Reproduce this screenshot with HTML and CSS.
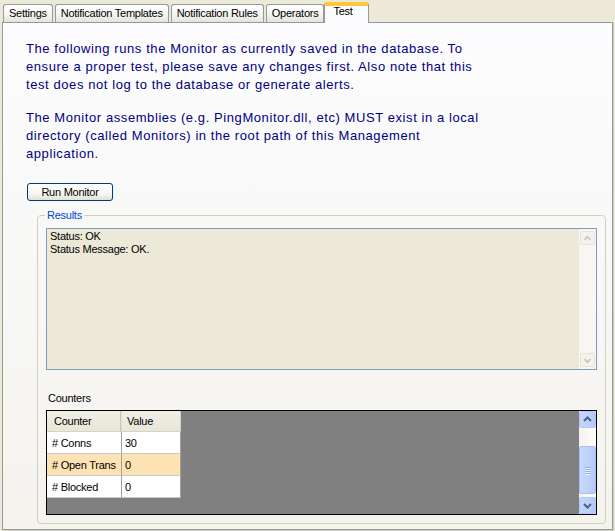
FILE: index.html
```html
<!DOCTYPE html>
<html>
<head>
<meta charset="utf-8">
<link rel="stylesheet" href="styles.css">
</head>
<body>
<div class="tabs">
  <div class="tab">Settings</div>
  <div class="tab">Notification Templates</div>
  <div class="tab">Notification Rules</div>
  <div class="tab">Operators</div>
  <div class="tab active">Test</div>
</div>
<div class="panel">
  <p class="info">The following runs the Monitor as currently saved in the database. To<br>ensure a proper test, please save any changes first. Also note that this<br>test does not log to the database or generate alerts.</p>
  <p class="info second">The Monitor assemblies (e.g. PingMonitor.dll, etc) MUST exist in a local<br>directory (called Monitors) in the root path of this Management<br>application.</p>
  <button class="run">Run Monitor</button>
  <div class="group">
    <span class="legend">Results</span>
    <div class="output">
      <div class="output-text">Status: OK<br>Status Message: OK.</div>
      <div class="vscroll off">
        <div class="sbtn"><svg width="15" height="15" viewBox="0 0 15 15"><path d="M4 9 L7.5 5.5 L11 9" fill="none" stroke="#c9c7ba" stroke-width="2"/></svg></div>
        <div class="track"></div>
        <div class="sbtn"><svg width="15" height="15" viewBox="0 0 15 15"><path d="M4 6 L7.5 9.5 L11 6" fill="none" stroke="#c9c7ba" stroke-width="2"/></svg></div>
      </div>
    </div>
    <div class="counters-label">Counters</div>
    <div class="grid">
      <div class="grid-area">
        <div class="row head">
          <div class="cell c1">Counter</div>
          <div class="cell c2">Value</div>
        </div>
        <div class="row">
          <div class="cell c1">#&nbsp;Conns</div>
          <div class="cell c2">30</div>
        </div>
        <div class="row sel">
          <div class="cell c1">#&nbsp;Open Trans</div>
          <div class="cell c2">0</div>
        </div>
        <div class="row">
          <div class="cell c1">#&nbsp;Blocked</div>
          <div class="cell c2">0</div>
        </div>
      </div>
      <div class="vscroll on">
        <div class="sbtn"><svg width="15" height="15" viewBox="0 0 15 15"><path d="M4 9 L7.5 5.5 L11 9" fill="none" stroke="#4d6185" stroke-width="2"/></svg></div>
        <div class="track">
          <div class="thumb"><span></span><span></span><span></span><span></span></div>
        </div>
        <div class="sbtn"><svg width="15" height="15" viewBox="0 0 15 15"><path d="M4 6 L7.5 9.5 L11 6" fill="none" stroke="#4d6185" stroke-width="2"/></svg></div>
      </div>
    </div>
  </div>
</div>
</body>
</html>
```
FILE: styles.css
```css
* { box-sizing: border-box; }
body {
  margin: 0;
  width: 615px;
  height: 531px;
  overflow: hidden;
  background: #ece9d8;
  font-family: "Liberation Sans", Arial, sans-serif;
  font-size: 11px;
  letter-spacing: -0.25px;
  color: #000;
}
.tabs {
  display: flex;
  align-items: flex-end;
  height: 22px;
  padding-left: 3px;
  gap: 2px;
}
.tab {
  height: 18px;
  padding: 0 5px;
  border: 1px solid #919b9c;
  border-bottom: none;
  border-radius: 3px 3px 0 0;
  background: linear-gradient(#ffffff, #f5f5f1 55%, #e4e3dc);
  line-height: 16px;
  white-space: nowrap;
}
.tab.active {
  position: relative;
  z-index: 1;
  height: 21px;
  margin-left: -2px;
  margin-bottom: -1px;
  padding: 0 15px 0 8px;
  background: #fcfcfe;
  border-top: 3px solid #ffc83c;
  box-shadow: inset 0 1px 0 #ffc83c;
  line-height: 13px;
}
.panel {
  margin-left: 2px;
  width: 611px;
  height: 508px;
  border: 1px solid #919b9c;
  background: linear-gradient(#fcfcfe, #f4f3ee);
  padding-top: 17px;
  box-shadow: 1px 1px 0 #d0cfc8;
}
.info {
  margin: 0 0 0 23px;
  color: #000080;
  font-size: 13px;
  letter-spacing: 0.58px;
  line-height: 18px;
}
.info.second { margin-top: 15px; }
.run {
  display: block;
  margin: 20px 0 0 24px;
  width: 86px;
  height: 18px;
  padding: 0;
  border: 1px solid #003c74;
  border-radius: 3px;
  background: linear-gradient(#ffffff, #f6f6f2 60%, #e3e0d6);
  font-family: "Liberation Sans", Arial, sans-serif;
  font-size: 11px;
  letter-spacing: -0.25px;
  line-height: 16px;
  color: #000;
}
.group {
  position: relative;
  margin: 14px 0 0 34px;
  width: 569px;
  height: 309px;
  border: 1px solid #d0d0bf;
  border-radius: 4px;
  padding: 12px 8px 0 8px;
}
.legend {
  position: absolute;
  top: -7px;
  left: 7px;
  padding: 0 2px;
  background: #f9f9f8;
  color: #0046d5;
  line-height: 13px;
}
.output {
  display: flex;
  width: 551px;
  height: 142px;
  border: 1px solid #7f9db9;
  background: #ece9d8;
}
.output-text {
  flex: 1;
  padding: 1px 3px;
  line-height: 13px;
}
.vscroll {
  display: flex;
  flex-direction: column;
  width: 17px;
}
.vscroll.off { background: #f7f6f1; padding: 1px 0; }
.vscroll.off .sbtn {
  margin: 1px 1px;
  height: 14px;
  border: 1px solid #e6e4da;
  border-radius: 2px;
  background: #f3f2ec;
}
.vscroll .track { flex: 1; }
.sbtn {
  display: flex;
  align-items: center;
  justify-content: center;
}
.sbtn svg { display: block; }
.counters-label {
  margin: 22px 0 0 2px;
  line-height: 13px;
}
.grid {
  display: flex;
  margin-top: 5px;
  width: 551px;
  height: 105px;
  border: 1px solid #000;
  background: #808080;
}
.grid-area { flex: 1; }
.row { display: flex; height: 22px; background: #fff; width: 134px; }
.row.head {
  height: 21px;
  background: linear-gradient(#f0efe6, #e8e6d8);
  border-bottom: 1px solid #d6d3c2;
}
.row.sel { background: #fde3b3; }
.cell {
  display: flex;
  align-items: center;
  height: 100%;
  border-bottom: 1px solid #c8c8c8;
  border-right: 1px solid #a0a0a0;
  white-space: nowrap;
}
.c1 { width: 75px; padding-left: 5px; }
.c2 { width: 59px; padding-left: 3px; }
.head .cell { border-bottom: none; border-right: 1px solid #e2e0d2; }
.head .c1 { padding-left: 7px; box-shadow: inset -2px 0 0 -1px #c7c5b2; }
.head .c2 { padding-left: 5px; border-right: 1px solid #d6d3c2; }
.vscroll.on { background: #f4f3ee; }
.vscroll.on .sbtn {
  height: 17px;
  border: 1px solid #b5c8f3;
  border-radius: 2px;
  background: linear-gradient(90deg, #c4d5fb, #bcd0fb 60%, #b2c7f7);
}
.vscroll.on .track {
  padding-top: 18px;
  background: linear-gradient(90deg, #f3f1ec, #fefefb);
}
.thumb {
  display: flex;
  flex-direction: column;
  align-items: center;
  justify-content: center;
  gap: 1px;
  height: 48px;
  border: 1px solid #a9bff0;
  border-radius: 2px;
  background: linear-gradient(90deg, #c9d8fc, #bed1fb 60%, #b4c8f6);
}
.thumb span {
  display: block;
  width: 6px;
  height: 1px;
  background: #8cb0f8;
  box-shadow: 0 1px 0 #eef4fe;
}
```
